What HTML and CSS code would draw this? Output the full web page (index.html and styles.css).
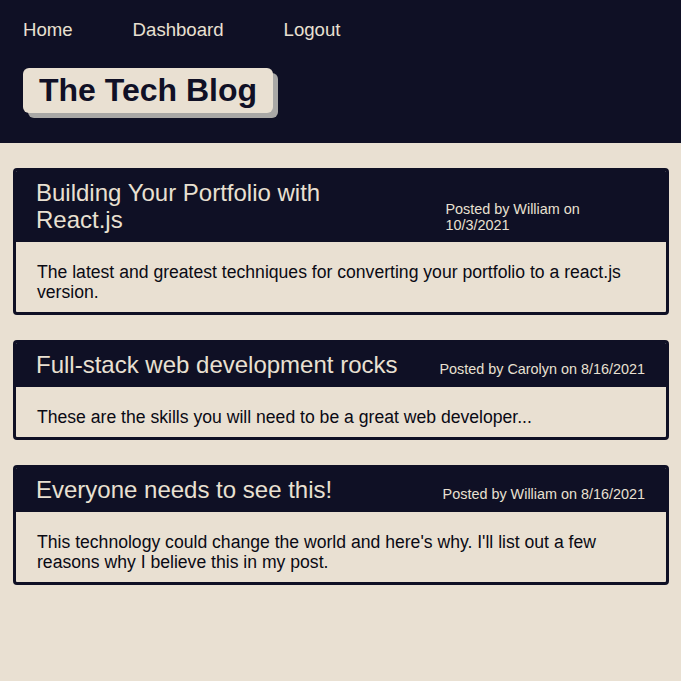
FILE: index.html
```html
<!DOCTYPE html>
<html lang="en">
<head>
<meta charset="utf-8">
<title>The Tech Blog</title>
<link rel="stylesheet" href="styles.css">
</head>
<body>
<header class="site-header">
  <nav class="nav">
    <a class="nav-link" href="#">Home</a>
    <a class="nav-link" href="#">Dashboard</a>
    <a class="nav-link" href="#">Logout</a>
  </nav>
  <h1 class="brand">The Tech Blog</h1>
</header>
<main class="posts">
  <article class="post">
    <div class="post-header">
      <h2 class="post-title">Building Your Portfolio with React.js</h2>
      <p class="post-meta">Posted by William on 10/3/2021</p>
    </div>
    <div class="post-body">
      <p>The latest and greatest techniques for converting your portfolio to a react.js version.</p>
    </div>
  </article>
  <article class="post">
    <div class="post-header">
      <h2 class="post-title">Full-stack web development rocks</h2>
      <p class="post-meta">Posted by Carolyn on 8/16/2021</p>
    </div>
    <div class="post-body">
      <p>These are the skills you will need to be a great web developer...</p>
    </div>
  </article>
  <article class="post">
    <div class="post-header">
      <h2 class="post-title">Everyone needs to see this!</h2>
      <p class="post-meta">Posted by William on 8/16/2021</p>
    </div>
    <div class="post-body">
      <p>This technology could change the world and here's why. I'll list out a few reasons why I believe this in my post.</p>
    </div>
  </article>
</main>
</body>
</html>
```

FILE: styles.css
```css
* {
  box-sizing: border-box;
}

html, body {
  margin: 0;
  padding: 0;
}

body {
  background: #e9e0d2;
  color: #101026;
  font-family: "Liberation Sans", Arial, sans-serif;
  min-height: 681px;
}

.site-header {
  background: #0f1025;
  padding: 19px 23px 30px;
}

.nav {
  display: flex;
  gap: 60px;
}

.nav-link {
  color: #e9e0d2;
  text-decoration: none;
  font-size: 18.6px;
  line-height: 21.4px;
}

.brand {
  display: block;
  width: fit-content;
  margin: 28px 0 0;
  padding: 4px 16px;
  font-size: 32px;
  line-height: 36.8px;
  font-weight: bold;
  color: #101026;
  background: #e9e0d2;
  border-radius: 6px;
  box-shadow: 5px 5px 0 #a9a8a6;
}

.posts {
  padding: 25px 12px 25px 13px;
  display: flex;
  flex-direction: column;
  gap: 25px;
}

.post {
  border: 3px solid #0f1025;
  border-radius: 4px;
  overflow: hidden;
}

.post-header {
  background: #0f1025;
  color: #e9e0d2;
  display: flex;
  justify-content: space-between;
  align-items: flex-end;
  gap: 37px;
  padding: 8px 21px 8.5px 20px;
}

.post-title {
  margin: 0;
  font-size: 24px;
  line-height: 27.2px;
  font-weight: normal;
}

.post-meta {
  margin: 0 0 1px;
  font-size: 14.4px;
  line-height: 16px;
}

.post-body {
  padding: 20px 21px 10px;
}

.post-body p {
  margin: 0;
  font-size: 17.6px;
  line-height: 20px;
  color: #0a0a14;
}
```
